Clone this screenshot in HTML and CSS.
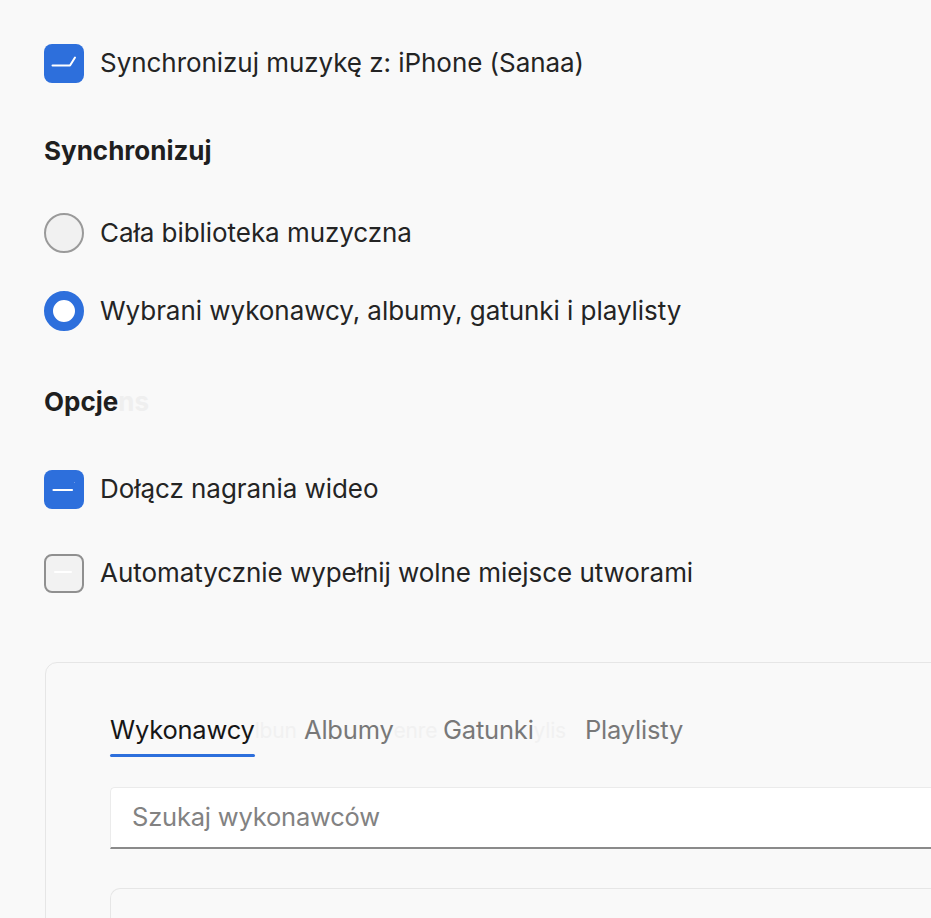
FILE: index.html
```
<!DOCTYPE html>
<html lang="pl">
<head>
<meta charset="utf-8">
<link rel="stylesheet" href="styles.css">
</head>
<body>
<div class="page">
  <label class="row first">
    <span class="box checked">
      <svg width="40" height="40" viewBox="0 0 40 40"><path d="M8.5 21.5 H26 L31 13.5" fill="none" stroke="#fff" stroke-width="2" stroke-linecap="round" stroke-linejoin="round"/></svg>
    </span>
    <span class="label">Synchronizuj muzykę z: iPhone (Sanaa)</span>
  </label>

  <h2 class="heading h-sync">Synchronizuj</h2>

  <label class="row r1">
    <span class="radio"></span>
    <span class="label">Cała biblioteka muzyczna</span>
  </label>
  <label class="row r2">
    <span class="radio on"></span>
    <span class="label">Wybrani wykonawcy, albumy, gatunki i playlisty</span>
  </label>

  <h2 class="heading h-opt">Opcje<span class="ghost">ns</span></h2>

  <label class="row c1">
    <span class="box checked">
      <svg width="40" height="40" viewBox="0 0 40 40"><path d="M9.5 20 H28" fill="none" stroke="#fff" stroke-width="2.2" stroke-linecap="round"/><path d="M30.5 12.5 V13" stroke="#fff" stroke-width="1" opacity="0.6"/></svg>
    </span>
    <span class="label">Dołącz nagrania wideo</span>
  </label>
  <label class="row c2">
    <span class="box empty">
      <svg width="40" height="40" viewBox="0 0 40 40"><path d="M11 18 H27" fill="none" stroke="#fff" stroke-width="2" stroke-linecap="round"/></svg>
    </span>
    <span class="label">Automatycznie wypełnij wolne miejsce utworami</span>
  </label>

  <section class="panel">
    <nav class="tabs">
      <span class="tab-cell w1"><span class="tab active">Wykonawcy</span><span class="ghost">lbun</span></span>
      <span class="tab-cell w2"><span class="tab">Albumy</span><span class="ghost">enre</span></span>
      <span class="tab-cell w3"><span class="tab">Gatunki</span><span class="ghost">ylis</span></span>
      <span class="tab-cell"><span class="tab">Playlisty</span></span>
    </nav>
    <div class="search">Szukaj wykonawców</div>
    <div class="list"></div>
  </section>
</div>
</body>
</html>
```
FILE: styles.css
```
* { box-sizing: border-box; }
html, body { margin: 0; padding: 0; }
body {
  background: #f9f9f9;
  font-family: Inter, "Noto Sans", sans-serif;
  color: #242424;
  width: 931px;
  height: 918px;
  overflow: hidden;
}
.page {
  padding: 43px 0 0 44px;
}
.row {
  display: flex;
  align-items: center;
  gap: 16px;
  height: 40px;
}
.label {
  font-size: 26px;
  letter-spacing: -0.05px;
  line-height: 30px;
  white-space: nowrap;
}
.box {
  width: 40px;
  height: 39px;
  border-radius: 8px;
  flex: none;
  display: block;
}
.box svg { display: block; }
.box.checked { background: #2d6fdc; }
.box.empty {
  background: #f2f2f2;
  border: 2px solid #909090;
}
.box.empty svg { margin: -2px; }
.radio {
  width: 40px;
  height: 40px;
  border-radius: 50%;
  flex: none;
  background: #f1f1f1;
  border: 2px solid #9a9a9a;
}
.radio.on {
  background: #fff;
  border: 9.5px solid #2d6fdc;
}
.heading {
  margin: 0;
  font-size: 26px;
  font-weight: 700;
  line-height: 30px;
  height: 30px;
  color: #1f1f1f;
  white-space: nowrap;
}
.ghost { color: #efefef; font-weight: 400; }
.h-opt .ghost { font-weight: 700; }
.h-sync { margin-top: 53px; }
.r1 { margin-top: 47px; }
.r2 { margin-top: 38px; }
.h-opt { margin-top: 56px; }
.c1 { margin-top: 52px; }
.c2 { margin-top: 44px; }
.panel {
  margin: 69px 0 0 1px;
  width: 920px;
  height: 400px;
  border: 1px solid #e6e6e6;
  border-radius: 12px;
  padding: 52px 0 0 64px;
}
.tabs {
  display: flex;
  align-items: flex-start;
  height: 72px;
  font-size: 25.5px;
  letter-spacing: -0.2px;
  line-height: 30px;
  white-space: nowrap;
}
.tab-cell {
  display: flex;
  flex: none;
  height: 44px;
}
.w1 { width: 194px; }
.w2 { width: 139px; }
.w3 { width: 142px; }
.tab {
  color: #787878;
  position: relative;
  height: 44px;
}
.tab.active {
  color: #161616;
}
.tab.active::after {
  content: "";
  position: absolute;
  left: 0;
  right: 0;
  top: 39px;
  height: 3px;
  border-radius: 2px;
  background: #2d6fdc;
}
.tabs .ghost {
  color: #f1f1f1;
  font-size: 21px;
  line-height: 32px;
}
.search {
  height: 62px;
  background: #fff;
  border: 1px solid #ebebeb;
  border-bottom: 2px solid #8a8a8a;
  border-radius: 5px 0 0 0;
  border-right: none;
  padding-left: 21px;
  font-size: 25.5px;
  letter-spacing: -0.2px;
  line-height: 57px;
  color: #828282;
}
.list {
  margin-top: 39px;
  height: 80px;
  border: 1px solid #e6e6e6;
  border-right: none;
  border-radius: 10px 0 0 0;
}
```
